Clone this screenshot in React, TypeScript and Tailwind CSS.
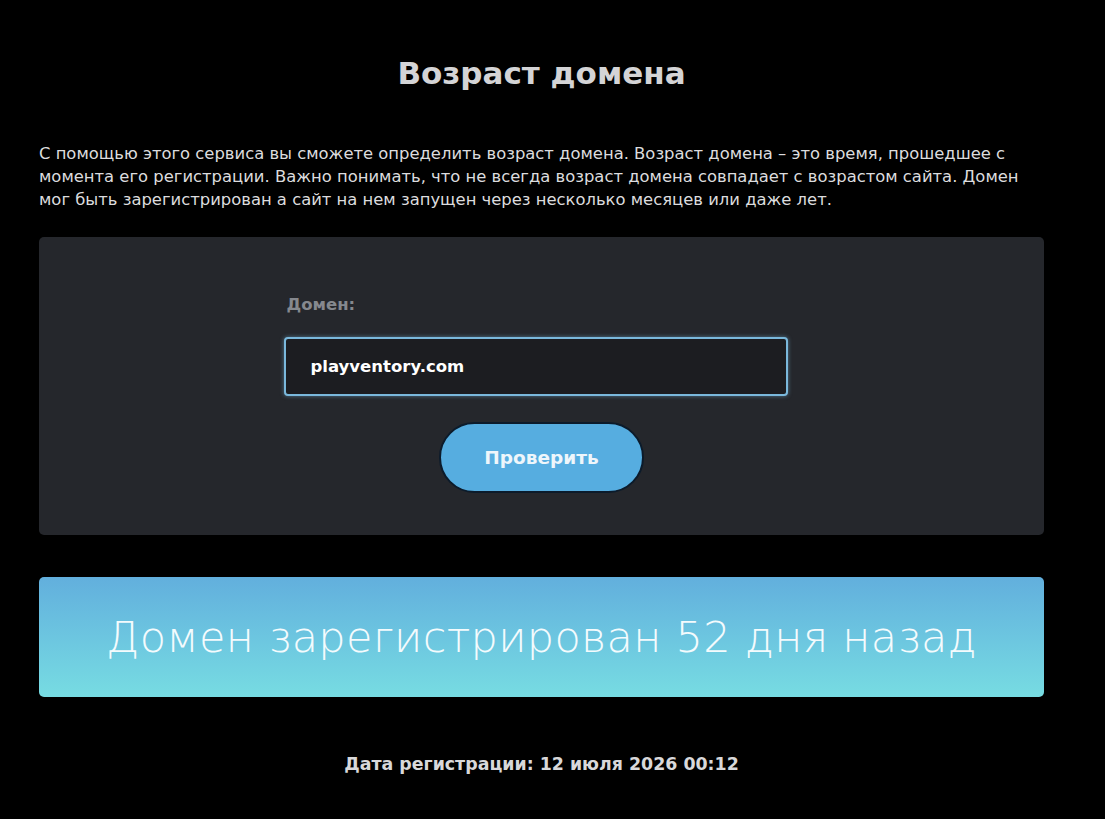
import { useState } from "react";

export default function App() {
  const [domain, setDomain] = useState("playventory.com");

  return (
    <div
      className="min-h-screen bg-black px-[39px] pt-[52px] pb-10"
      style={{ fontFamily: '"DejaVu Sans", "Noto Sans", sans-serif' }}
    >
      <div className="w-[1005px]">
        <h1 className="text-center text-[31px] font-bold leading-[42px] text-[#d4d4d6]">
          Возраст домена
        </h1>

        <p className="mt-[48px] whitespace-nowrap text-[16.4px] leading-[23px] text-[#dcdcde]">
          С помощью этого сервиса вы сможете определить возраст домена. Возраст домена – это время, прошедшее с
          <br />
          момента его регистрации. Важно понимать, что не всегда возраст домена совпадает с возрастом сайта. Домен
          <br />
          мог быть зарегистрирован а сайт на нем запущен через несколько месяцев или даже лет.
        </p>

        <div className="mt-[26px] flex h-[298px] flex-col items-center rounded-[5px] bg-[#25272c] pt-[56px]">
          <div className="mr-[12px] w-[504px]">
            <label className="block pl-[3px] text-[16.5px] font-semibold leading-6 text-[#85888e]">Домен:</label>
            <input
              value={domain}
              onChange={(e) => setDomain(e.target.value)}
              className="mt-[20px] h-[59px] w-full rounded-[4px] border-2 border-[#7ab8dc] bg-[#1c1d21] px-[25px] text-[16.5px] font-semibold text-white shadow-[0_0_4px_rgba(122,184,220,0.55)] outline-none"
            />
          </div>
          <button className="mt-[26px] h-[71px] w-[205px] rounded-full border-2 border-[#0c1b2b] bg-[#56ade0] text-[18.5px] font-bold text-[#eef6fb]">
            Проверить
          </button>
        </div>

        <div className="mt-[42px] flex h-[120px] items-center justify-center rounded-[5px] bg-gradient-to-b from-[#62afdd] to-[#77dce2]">
          <span className="text-[43px] font-light tracking-[0.3px] text-[#f4fbfd]">
            Домен зарегистрирован 52 дня назад
          </span>
        </div>

        <p className="mt-[54px] text-center text-[17.4px] font-bold text-[#d8d8da]">
          Дата регистрации: 12 июля 2026 00:12
        </p>
      </div>
    </div>
  );
}
